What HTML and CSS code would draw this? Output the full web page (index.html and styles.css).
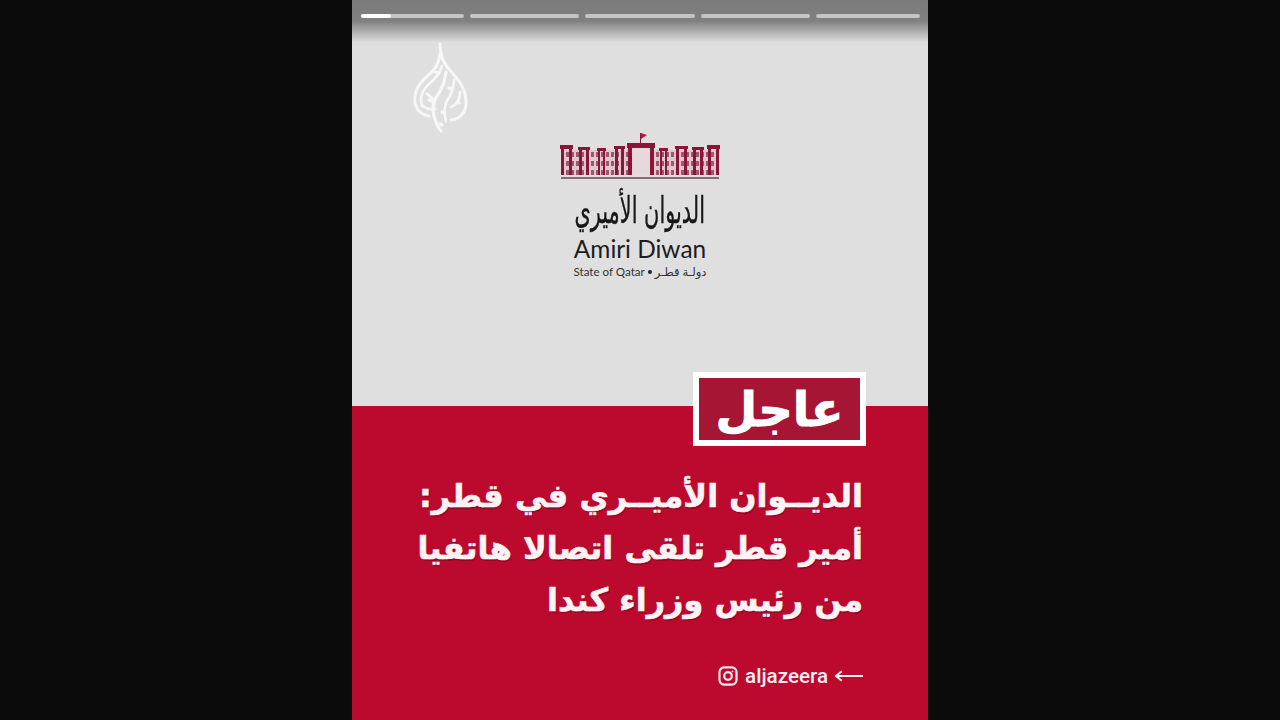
FILE: index.html
```html
<!DOCTYPE html>
<html lang="ar">
<head>
    <meta charset="UTF-8">
    <title>عاجل</title>
    <link rel="stylesheet" href="styles.css">
</head>
<body>
    <div class="story">
        <div class="top-panel">
            <div class="top-shade"></div>
            <div class="progress">
                <div class="bar"><div class="bar-fill"></div></div>
                <div class="bar"></div>
                <div class="bar"></div>
                <div class="bar"></div>
                <div class="bar"></div>
            </div>
            <svg class="aj-logo" viewBox="0 0 56 92" fill="none" stroke="#f7f7f7" stroke-linecap="round">
                <path d="M27 2c0 10 2 17 8 24 8 9 17 18 18 32 1 12-6 19-15 20" stroke-width="3"/>
                <path d="M27 12c-1 8-3 13-8 18C11 37 3 43 2 55c-1 10 4 17 14 19" stroke-width="3"/>
                <path d="M29 24c-3 10-10 15-16 21-5 6-6 13-4 19" stroke-width="2.6"/>
                <path d="M33 30c-1 9-4 17-9 24-4 6-6 14-1 26 1 4 3 6 5 9" stroke-width="3.2"/>
                <path d="M41 38c0 9-3 15-7 21-3 5-3 12-1 20" stroke-width="2.6"/>
                <path d="M47 50c0 8-4 13-9 15M14 52c4 2 6 5 7 9M10 64c4 3 8 4 12 3" stroke-width="2.8"/>
                <path d="M22 30l4 1M16 58l2 1M36 46l2 1M44 60l2 1M29 70l2 1M27 82l2 1" stroke-width="3.2"/>
            </svg>
            <div class="diwan">
                <svg class="palace" viewBox="0 0 160 45">
                    <defs>
                        <pattern id="wins" width="5" height="9" patternUnits="userSpaceOnUse" y="19">
                            <rect width="5" height="9" fill="#dcc8ce"/>
                            <rect x="1" y="2" width="3" height="5" fill="#a0576c"/>
                        </pattern>
                    </defs>
                    <rect x="2" y="19" width="156" height="25" fill="url(#wins)"/>
                    <rect class="door" x="72" y="16" width="18" height="28"/>
                    <path class="flag-pole" d="M80.5 2v11"/>
                    <path class="flag" d="M81 2l6 2-6 4z"/>
                    <path class="walls" d="M0 14h13v4h-1v26h-3V18H4v26H1V18H0zM18 16h12v3h-1v25h-3V19h-4v25h-3V19h-1zM37 17h9v3h-1v24h-2V20h-3v24h-2V20h-1zM54 15h11v3h-1v26h-3V18h-3v26h-3V18h-1zM67 12h28v5h-1v27h-4V17H72v27h-4V17h-1zM99 17h9v3h-1v24h-2V20h-3v24h-2V20h-1zM115 15h13v3h-1v26h-3V18h-5v26h-3V18h-1zM132 16h12v3h-1v25h-3V19h-4v25h-3V19h-1zM147 14h13v4h-1v26h-3V18h-5v26h-3V18h-1z"/>
                </svg>
                <div class="palace-line"></div>
                <div class="diwan-ar">الديوان الأميري</div>
                <div class="diwan-en">Amiri Diwan</div>
                <div class="diwan-state">
                    <span>State of Qatar</span>
                    <span class="dot"></span>
                    <span class="state-ar">دولـة قطـر</span>
                </div>
            </div>
            <div class="badge"><span class="badge-text">عاجل</span></div>
        </div>
        <div class="red-panel">
            <h1 class="headline">
                <span class="line">الديــوان الأميــري في قطر:</span>
                <span class="line">أمير قطر تلقى اتصالا هاتفيا</span>
                <span class="line">من رئيس وزراء كندا</span>
            </h1>
            <div class="handle">
                <svg class="ig" viewBox="0 0 22 22" fill="none" stroke="#fbe9ec" stroke-width="2.4">
                    <rect x="1.6" y="1.6" width="18.8" height="18.8" rx="5.2"/>
                    <circle cx="11" cy="11" r="4.2"/>
                    <circle cx="16" cy="6" r="1" fill="#fbe9ec" stroke="none"/>
                </svg>
                <span class="handle-name">aljazeera</span>
                <svg class="arrow" viewBox="0 0 30 12" fill="none" stroke="#fdf3f4" stroke-width="2">
                    <path d="M30 6H2M8 1L2 6l6 5"/>
                </svg>
            </div>
        </div>
    </div>
</body>
</html>
```

FILE: styles.css
```css
* {
    margin: 0;
    padding: 0;
    box-sizing: border-box;
}

body {
    background: #0b0b0b;
    height: 720px;
    overflow: hidden;
    display: flex;
    justify-content: center;
    font-family: 'DejaVu Sans', sans-serif;
}

.story {
    width: 576px;
    height: 720px;
    display: flex;
    flex-direction: column;
}

.top-panel {
    position: relative;
    height: 406px;
    background: #dfdfdf;
}

.top-shade {
    position: absolute;
    top: 0;
    left: 0;
    right: 0;
    height: 42px;
    background: linear-gradient(180deg, #7b7b7b 0%, #808080 50%, #dcdcdc 100%);
}

.progress {
    position: absolute;
    top: 14px;
    left: 9px;
    right: 8px;
    display: flex;
    gap: 6px;
}

.bar {
    flex: 1;
    height: 4px;
    border-radius: 2px;
    background: #c4c4c4;
}

.bar:first-child {
    flex: 0 0 103px;
}

.bar:last-child {
    flex: 0 0 104px;
}

.bar-fill {
    width: 30px;
    height: 4px;
    border-radius: 2px;
    background: #fff;
}

.aj-logo {
    position: absolute;
    left: 61px;
    top: 42px;
    width: 56px;
    height: 92px;
    filter: blur(0.6px);
}

.diwan {
    position: absolute;
    top: 131px;
    left: 208px;
    width: 160px;
    display: flex;
    flex-direction: column;
    align-items: center;
}

.palace {
    width: 160px;
    height: 45px;
    display: block;
}

.walls {
    fill: #8a1538;
}

.door {
    fill: #e6d8dc;
}

.flag {
    fill: #b5173f;
}

.flag-pole {
    stroke: #8a1538;
    stroke-width: 1;
}

.palace-line {
    width: 158px;
    height: 2px;
    margin-top: 1px;
    background: #8a6a73;
}

.diwan-ar {
    margin-top: 9px;
    font-size: 29px;
    line-height: 44px;
    color: #161616;
    white-space: nowrap;
    transform: scale(0.72, 1.25);
    -webkit-text-stroke: 0.3px #161616;
}

.diwan-en {
    font-family: 'Lato', sans-serif;
    font-size: 24.4px;
    line-height: 24px;
    margin-top: 5px;
    color: #1d1d1d;
    white-space: nowrap;
}

.diwan-state {
    display: flex;
    align-items: center;
    gap: 3px;
    margin-top: 5px;
    font-family: 'Lato', 'DejaVu Sans', sans-serif;
    font-size: 11.6px;
    line-height: 12px;
    color: #333;
    white-space: nowrap;
}

.dot {
    width: 4px;
    height: 4px;
    border-radius: 50%;
    background: #222;
}

.badge {
    position: absolute;
    top: 372px;
    left: 341px;
    width: 173px;
    height: 74px;
    background: #a71534;
    border: 6px solid #fff;
    display: flex;
    align-items: center;
    justify-content: center;
}

.badge-text {
    font-size: 48px;
    font-weight: 700;
    line-height: 60px;
    color: #fff;
    -webkit-text-stroke: 1px #fff;
}

.red-panel {
    flex: 1;
    background: #bc0a2f;
    padding: 64px 65px 0 0;
    display: flex;
    flex-direction: column;
    align-items: flex-end;
}

.headline {
    direction: rtl;
    text-align: right;
    font-size: 32px;
    font-weight: 700;
    color: #fdf3f4;
    text-shadow: 1px 2px 0 rgba(90, 0, 20, 0.35);
    -webkit-text-stroke: 0.6px #fdf3f4;
}

.line {
    display: block;
    height: 52px;
    line-height: 52px;
    white-space: nowrap;
}

.handle {
    display: flex;
    align-items: center;
    margin-top: 38px;
    color: #fbeef0;
}

.ig {
    width: 20px;
    height: 20px;
}

.handle-name {
    font-family: 'Roboto', sans-serif;
    font-size: 20.6px;
    font-weight: 500;
    line-height: 24px;
    margin-left: 7px;
    white-space: nowrap;
}

.arrow {
    width: 29px;
    height: 12px;
    margin-left: 6px;
}
```
